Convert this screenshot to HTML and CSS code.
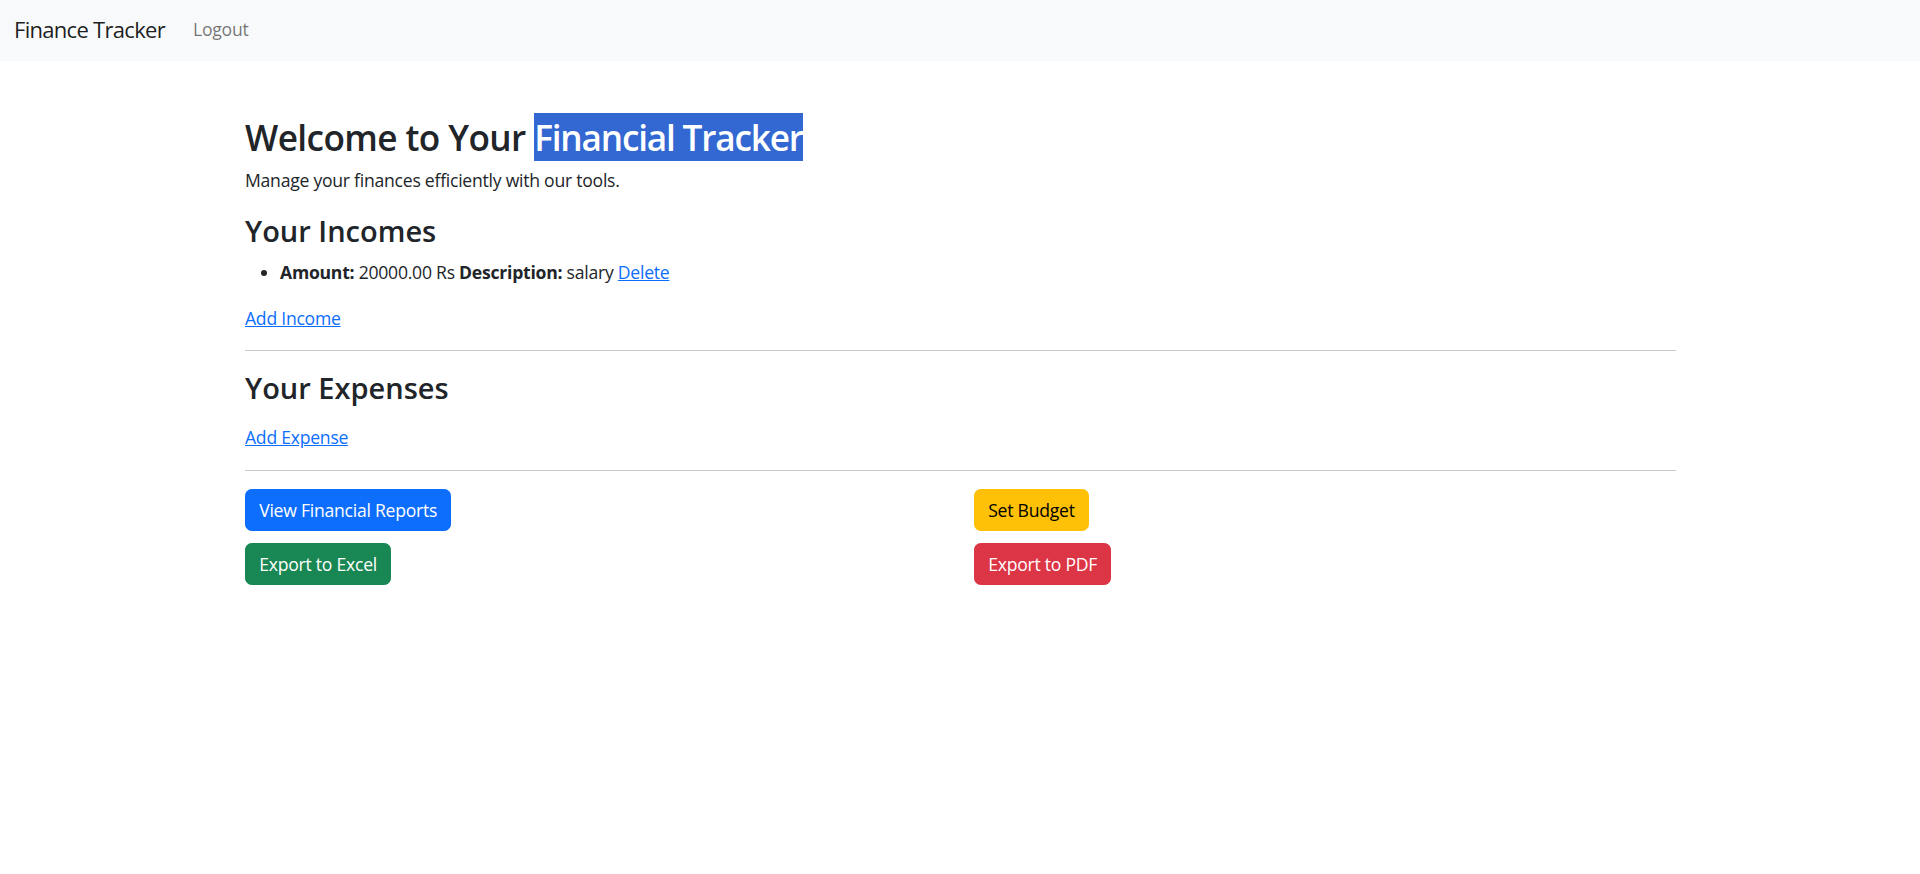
FILE: index.html
```html
<!DOCTYPE html>
<html lang="en">
<head>
<meta charset="utf-8">
<title>Finance Tracker</title>
<link rel="stylesheet" href="styles.css">
</head>
<body>
<nav class="navbar">
  <a class="brand" href="#">Finance Tracker</a>
  <a class="nav-link" href="#">Logout</a>
</nav>
<main class="container">
  <h1 class="title">Welcome to Your <span class="sel">Financial Tracker</span></h1>
  <p class="intro">Manage your finances efficiently with our tools.</p>

  <h2 class="section-title incomes">Your Incomes</h2>
  <ul class="item-list">
    <li><strong>Amount:</strong> 20000.00 Rs <strong>Description:</strong> salary <a class="link" href="#">Delete</a></li>
  </ul>
  <div class="link-line"><a class="link" href="#">Add Income</a></div>
  <hr class="divider">

  <h2 class="section-title expenses">Your Expenses</h2>
  <div class="link-line"><a class="link" href="#">Add Expense</a></div>
  <hr class="divider last">

  <div class="actions">
    <div class="col">
      <a class="btn btn-primary" href="#">View Financial Reports</a>
      <a class="btn btn-success" href="#">Export to Excel</a>
    </div>
    <div class="col">
      <a class="btn btn-warning" href="#">Set Budget</a>
      <a class="btn btn-danger" href="#">Export to PDF</a>
    </div>
  </div>
</main>
</body>
</html>
```

FILE: styles.css
```css
* { box-sizing: border-box; }

html, body {
  margin: 0;
  padding: 0;
  background: #ffffff;
}

body {
  font-family: "Open Sans", "Noto Sans", "Liberation Sans", sans-serif;
  font-size: 17.6px;
  line-height: 26.4px;
  letter-spacing: -0.25px;
  color: #212529;
}

.navbar {
  height: 61px;
  background: #f8f9fa;
  display: flex;
  align-items: flex-start;
  padding: 0 14px;
}

.brand {
  font-size: 22px;
  line-height: 33px;
  letter-spacing: -0.7px;
  padding-top: 13px;
  color: rgba(0, 0, 0, 0.9);
  text-decoration: none;
  margin-right: 28px;
}

.nav-link {
  font-size: 17.6px;
  line-height: 26.4px;
  padding-top: 16px;
  color: rgba(0, 0, 0, 0.55);
  text-decoration: none;
}

.container {
  width: 1431px;
  margin-left: 245px;
  padding-top: 55px;
}

.title {
  font-size: 35.2px;
  line-height: 42.24px;
  font-weight: 600;
  letter-spacing: -0.6px;
  margin: 0 0 8.8px;
}

.sel {
  background: #3367d1;
  color: #ffffff;
  letter-spacing: -1.2px;
}

.intro {
  margin: 0 0 22px;
}

.section-title {
  font-size: 29px;
  line-height: 32px;
  font-weight: 600;
  letter-spacing: 0;
  margin: 0;
}

.section-title.incomes { margin-bottom: 12px; }
.section-title.expenses { margin-bottom: 20.5px; }

.item-list {
  margin: 0 0 19px;
  padding-left: 35px;
}

.item-list strong { font-weight: 700; }

.link {
  color: #0d6efd;
  text-decoration: underline;
}

.divider {
  border: 0;
  border-top: 1px solid #c8c9ca;
  margin: 18.5px 0 21px;
  height: 0;
}

.divider.last {
  margin: 19px 0 18.7px;
}

.actions {
  display: grid;
  grid-template-columns: 1fr 1fr;
  column-gap: 27px;
}

.col {
  display: flex;
  flex-direction: column;
  align-items: flex-start;
  gap: 12px;
}

.btn {
  display: inline-block;
  font-size: 17.6px;
  line-height: 26.4px;
  padding: 6.8px 13.2px;
  border: 1px solid transparent;
  border-radius: 6.6px;
  text-decoration: none;
  color: #ffffff;
}

.btn-primary { background: #0d6efd; border-color: #0d6efd; }
.btn-success { background: #198754; border-color: #198754; }
.btn-warning { background: #ffc107; border-color: #ffc107; color: #000000; }
.btn-danger  { background: #dc3545; border-color: #dc3545; }
```
